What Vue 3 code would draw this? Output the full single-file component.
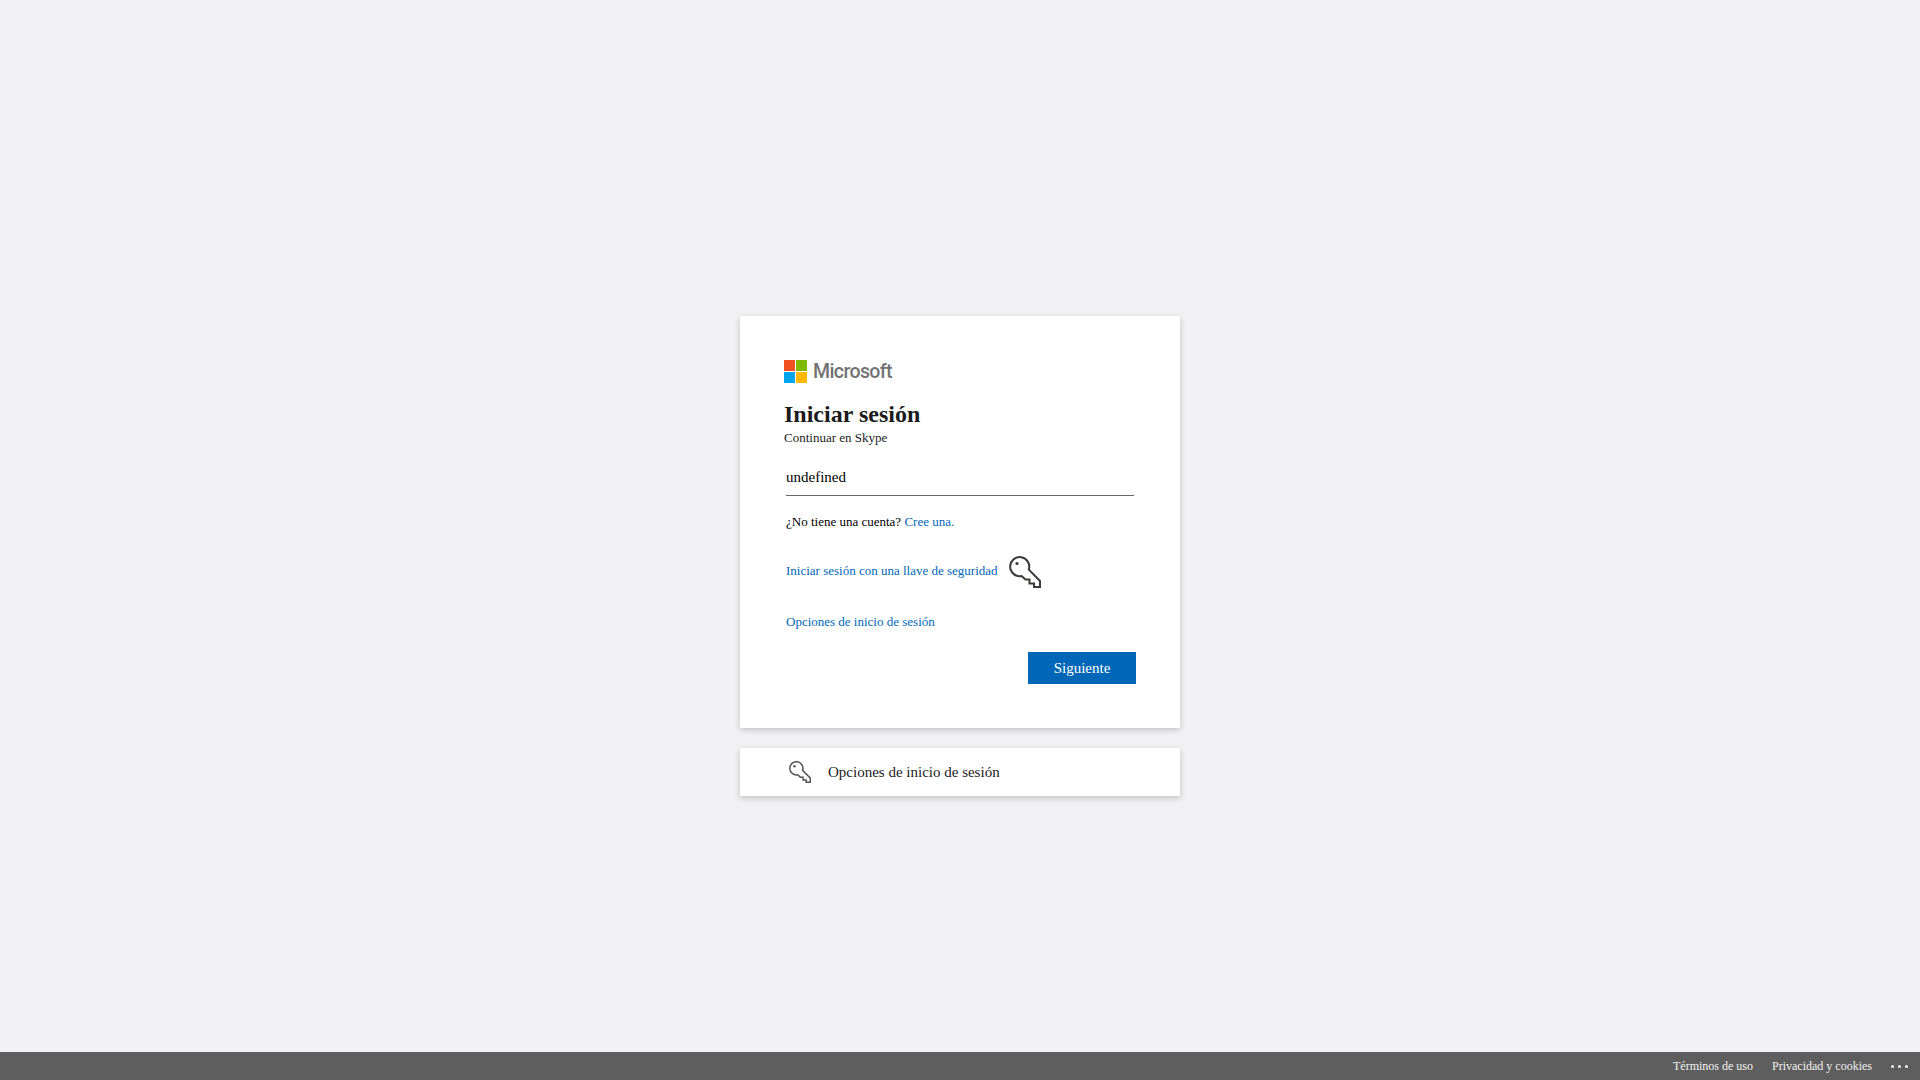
<script setup>
const tiles = ['#f25022', '#7fba00', '#00a4ef', '#ffb900']
const keyPath = 'M19.8 13.6A9.55 9.55 0 1 0 12.6 20L16.5 23.5H20.5V27.5H25V31H31V25L19.8 13.6Z'
</script>

<template>
  <div class="page">
    <main class="center">
      <section class="card">
        <div class="logo">
          <span class="logo-tiles">
            <i v-for="c in tiles" :key="c" :style="{ background: c }"></i>
          </span>
          <span class="logo-word">Microsoft</span>
        </div>
        <h1>Iniciar sesión</h1>
        <p class="sub">Continuar en Skype</p>
        <div class="form">
          <div class="field">undefined</div>
          <p class="no-account">¿No tiene una cuenta? <a href="#">Cree una.</a></p>
          <div class="key-row">
            <a href="#">Iniciar sesión con una llave de seguridad</a>
            <svg class="key-big" viewBox="0 0 32 32" fill="none" stroke="#3b3a39" stroke-width="2">
              <path :d="keyPath" />
              <circle cx="8" cy="7.5" r="1.6" fill="#3b3a39" stroke="none" />
            </svg>
          </div>
          <a href="#" class="options-link">Opciones de inicio de sesión</a>
          <div class="actions">
            <button type="button">Siguiente</button>
          </div>
        </div>
      </section>

      <section class="card-small">
        <svg class="key-small" viewBox="0 0 32 32" fill="none" stroke="#555" stroke-width="2.2">
          <path :d="keyPath" />
          <circle cx="8" cy="7.5" r="1.8" fill="#555" stroke="none" />
        </svg>
        <span>Opciones de inicio de sesión</span>
      </section>
    </main>

    <footer>
      <a href="#">Términos de uso</a>
      <a href="#">Privacidad y cookies</a>
      <a href="#" class="dots"><i></i><i></i><i></i></a>
    </footer>
  </div>
</template>

<style scoped>
.page {
  display: flex;
  flex-direction: column;
  height: 1080px;
  background: #f1f1f3;
  font-family: "Liberation Serif", serif;
  color: #1b1b1b;
  overflow: hidden;
}

.center {
  flex: 1;
  display: flex;
  flex-direction: column;
  align-items: center;
  padding-top: 316px;
  gap: 20px;
}

.card {
  box-sizing: border-box;
  width: 440px;
  height: 412px;
  padding: 44px;
  background: #fff;
  box-shadow: 0 2px 6px rgba(0, 0, 0, 0.2);
}

.logo {
  display: flex;
  align-items: flex-start;
  height: 24px;
  gap: 6px;
}

.logo-tiles {
  display: grid;
  grid-template-columns: 11px 11px;
  grid-template-rows: 11px 11px;
  gap: 1px;
}

.logo-tiles i {
  display: block;
}

.logo-word {
  font-family: Roboto, sans-serif;
  font-size: 19.5px;
  font-weight: 500;
  letter-spacing: -0.6px;
  color: #737373;
  line-height: 23px;
}

h1 {
  margin: 16px 0 0;
  font-size: 24px;
  font-weight: 700;
  line-height: 28px;
  color: #1b1b1b;
}

.sub {
  margin: 1px 0 0;
  font-size: 13px;
  line-height: 18px;
  color: #1b1b1b;
}

.form {
  padding: 0 0 0 2px;
}

.field {
  width: 348px;
  height: 35px;
  margin-top: 14px;
  box-sizing: border-box;
  border-bottom: 1px solid #666;
  font-size: 15px;
  line-height: 32px;
  color: #000;
}

.no-account {
  margin: 17px 0 0;
  font-size: 13px;
  line-height: 18px;
  color: #000;
}

a {
  color: #0067b8;
  text-decoration: none;
}

.key-row {
  display: flex;
  align-items: flex-start;
  gap: 11px;
  margin-top: 24px;
  height: 32px;
  font-size: 13px;
  line-height: 18px;
}

.key-row a {
  margin-top: 7px;
}

.key-big {
  width: 32px;
  height: 32px;
  margin-top: 1px;
}

.options-link {
  display: block;
  margin-top: 26px;
  font-size: 13px;
  line-height: 18px;
}

.actions {
  display: flex;
  justify-content: flex-end;
  width: 350px;
  margin-top: 21px;
}

button {
  width: 108px;
  height: 32px;
  border: 0;
  padding: 0;
  background: #0067b8;
  color: #fff;
  font-family: inherit;
  font-size: 15px;
}

.card-small {
  box-sizing: border-box;
  display: flex;
  align-items: center;
  width: 440px;
  height: 48px;
  padding-left: 49px;
  gap: 17px;
  background: #fff;
  box-shadow: 0 2px 6px rgba(0, 0, 0, 0.2);
  font-size: 15px;
  color: #1b1b1b;
}

.key-small {
  width: 22px;
  height: 22px;
}

footer {
  flex: none;
  display: flex;
  align-items: center;
  justify-content: flex-end;
  height: 28px;
  padding-right: 12px;
  gap: 19px;
  background: #5e5e5e;
  font-size: 12px;
}

footer a {
  color: #f2f2f2;
}

.dots {
  display: flex;
  gap: 4px;
}

.dots i {
  width: 3px;
  height: 3px;
  border-radius: 50%;
  background: #f2f2f2;
}
</style>

<style>
html, body {
  background: #f1f1f3;
}
</style>
